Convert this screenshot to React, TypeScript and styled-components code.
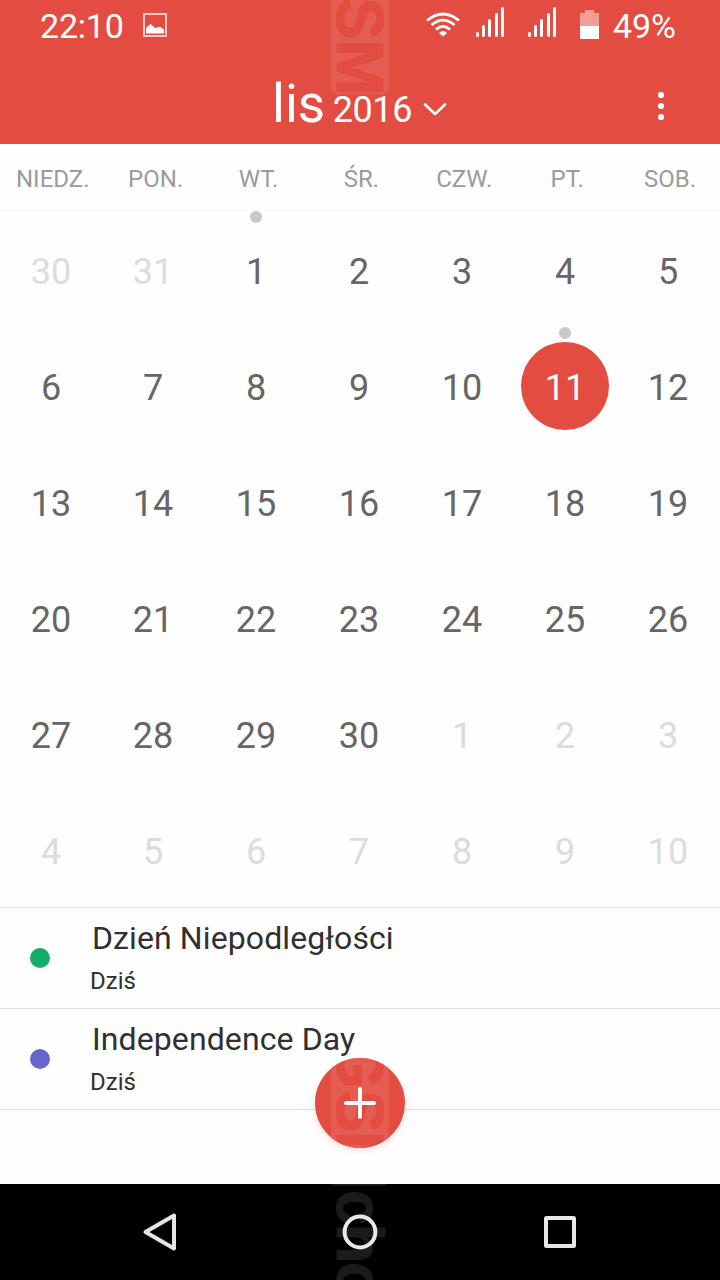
import React from 'react';
import styled, { createGlobalStyle } from 'styled-components';

const RED = '#e34c40';

const GlobalStyle = createGlobalStyle`
  * { box-sizing: border-box; }
  html, body { margin: 0; padding: 0; background: #fefefe; }
  body { font-family: Roboto, "Noto Sans", sans-serif; }
`;

const Screen = styled.div`
  width: 720px;
  height: 1280px;
  display: flex;
  flex-direction: column;
  overflow: hidden;
  background: #fefefe;
`;

const Header = styled.header`
  position: relative;
  height: 144px;
  flex: none;
  background: ${RED};
  color: #fff;
`;

const Stamp = styled.svg<{ $left: number }>`
  position: absolute;
  left: ${(p) => p.$left}px;
  top: 0;
  pointer-events: none;
`;

const StatusBar = styled.div`
  position: relative;
  height: 50px;
  padding: 0 44px 0 40px;
  display: flex;
  justify-content: space-between;
`;

const StatusGroup = styled.div`
  display: flex;
  align-items: flex-start;
`;

const StatusText = styled.span<{ $spacing?: number }>`
  font-size: 34px;
  line-height: 52px;
  letter-spacing: ${(p) => p.$spacing ?? 0}px;
`;

const Glyph = styled.svg`
  display: block;
  flex: none;
`;

const Spacer = styled.span<{ $w: number }>`
  width: ${(p) => p.$w}px;
  flex: none;
`;

const TitleBar = styled.div`
  position: relative;
  height: 94px;
  display: flex;
  justify-content: space-between;
  padding: 0 49px 0 272px;
`;

const MonthPicker = styled.div`
  display: flex;
  align-items: baseline;
  height: 94px;
  line-height: 108px;
`;

const MonthName = styled.span`
  font-size: 53px;
`;

const Year = styled.span`
  margin-left: 7.5px;
  font-size: 36px;
  letter-spacing: -0.4px;
`;

const Chevron = styled(Glyph)`
  margin-left: 11.5px;
  align-self: flex-start;
  margin-top: 50px;
`;

const MenuIcon = styled(Glyph)`
  margin-top: 40px;
`;

const Weekdays = styled.div`
  flex: none;
  height: 67px;
  width: 721px;
  margin-left: 1.3px;
  display: grid;
  grid-template-columns: repeat(7, 102.9px);
  color: #9b9b9b;
  font-size: 24px;
  line-height: 71px;
  text-align: center;
`;

const Divider = styled.div`
  flex: none;
  height: 1px;
  margin-top: -1px;
  background: #f8f8f8;
`;

const MonthGrid = styled.div`
  flex: none;
  display: grid;
  margin-left: 0.5px;
  grid-template-columns: 101px repeat(6, 103px);
  grid-auto-rows: 116px;
`;

const Cell = styled.div`
  display: flex;
  flex-direction: column;
  align-items: center;
`;

const Marker = styled.i<{ $on: boolean }>`
  width: 12px;
  height: 12px;
  flex: none;
  border-radius: 50%;
  margin-bottom: 3px;
  background: ${(p) => (p.$on ? '#c8c8c8' : 'transparent')};
`;

type DayKind = 'out' | 'in' | 'today';
const dayColor = { out: '#dcdcdc', in: '#666', today: '#fff' };

const Day = styled.div<{ $kind: DayKind }>`
  width: 88px;
  height: 88px;
  flex: none;
  border-radius: 50%;
  background: ${(p) => (p.$kind === 'today' ? RED : 'transparent')};
  color: ${(p) => dayColor[p.$kind]};
  font-size: 36px;
  line-height: 92px;
  text-align: center;
`;

const Events = styled.main`
  position: relative;
  flex: 1;
  border-top: 1px solid #e0e0e0;
`;

const EventRow = styled.div`
  height: 101px;
  border-bottom: 1px solid #e0e0e0;
  display: flex;
  align-items: center;
  padding-left: 30px;
`;

const EventDot = styled.i<{ $color: string }>`
  width: 20px;
  height: 20px;
  border-radius: 50%;
  background: ${(p) => p.$color};
`;

const EventText = styled.div`
  height: 100px;
  margin-left: 40px;
  padding-top: 9px;
  color: #303030;
`;

const EventTitle = styled.div`
  padding-left: 2px;
  font-size: 32px;
  line-height: 42px;
  letter-spacing: 0.1px;
`;

const EventWhen = styled.div`
  margin-top: 1px;
  font-size: 24px;
  line-height: 42px;
`;

const AddButton = styled.button`
  position: absolute;
  left: 315px;
  top: 150px;
  width: 90px;
  height: 90px;
  padding: 0;
  border: 0;
  border-radius: 50%;
  overflow: hidden;
  background: ${RED};
  box-shadow: 0 3px 6px rgba(227, 76, 64, 0.18);
`;

const NavBar = styled.nav`
  position: relative;
  flex: none;
  height: 96px;
  display: flex;
  align-items: center;
  justify-content: space-between;
  padding: 0 143px 0 142px;
  background: #000;
`;

const NavIcon = styled(Glyph)`
  position: relative;
`;

type LetterProps = { ch: string; x: number; y: number; length: number; color: string };

/* A bold letter turned a quarter clockwise, standing on the line at x. */
const Letter = ({ ch, x, y, length, color }: LetterProps) => (
  <text
    transform={`translate(${x} ${y}) rotate(90)`}
    fontFamily="Liberation Sans, sans-serif"
    fontWeight="bold"
    fontSize="67"
    textLength={length}
    lengthAdjust="spacingAndGlyphs"
    fill={color}
    stroke={color}
    strokeWidth="1"
    strokeLinejoin="round"
  >
    {ch}
  </text>
);

const Signal = () => (
  <Glyph width="29" height="50" viewBox="0 0 29 50">
    <path
      d="M1.500 33.500V35.500M7.500 26.500V35.500M13.500 20.500V35.500M20.500 14.500V35.500M26.500 8.500V35.500"
      stroke="#fff"
      strokeWidth="3"
      strokeLinecap="round"
    />
  </Glyph>
);

const weekdays = ['NIEDZ.', 'PON.', 'WT.', 'ŚR.', 'CZW.', 'PT.', 'SOB.'];

const days = Array.from({ length: 42 }, (_, i) => {
  const n = i - 1;
  const kind: DayKind = n < 1 || n > 30 ? 'out' : n === 11 ? 'today' : 'in';
  return { label: n < 1 ? n + 31 : n > 30 ? n - 30 : n, kind, marked: n === 1 || n === 11 };
});

const events = [
  { title: 'Dzień Niepodległości', when: 'Dziś', color: '#13ad67' },
  { title: 'Independence Day', when: 'Dziś', color: '#6466cc' },
];

export default function App() {
  return (
    <>
      <GlobalStyle />
      <Screen>
        <Header>
          <Stamp $left={331} width="58" height="94" viewBox="0 0 58 94">
            <rect y="-10" width="58" height="104" rx="5" fill="#e55d52" />
            <Letter ch="S" x={5.5} y={-2.5} length={42} color={RED} />
            <Letter ch="M" x={5.5} y={39} length={57} color={RED} />
          </Stamp>
          <StatusBar>
            <StatusGroup>
              <StatusText $spacing={-0.2}>22:10</StatusText>
              <Spacer $w={19} />
              <Glyph width="25" height="50" viewBox="0 0 25 50">
                <rect x="1" y="14" width="22" height="22" fill="none" stroke="#fad9d6" strokeWidth="1.8" />
                <path d="M3 33.500V28L7.500 24L12 28L17 26.800L21 29.500V33.500Z" fill="#fff" />
              </Glyph>
            </StatusGroup>
            <StatusGroup>
              <Glyph width="34" height="50" viewBox="0 0 34 50">
                <g fill="none" stroke="#fff" strokeWidth="2.7">
                  <path d="M1 20.500Q17 7.500 33 20.500" />
                  <path d="M5.500 25Q17 15.200 28.500 25" />
                  <path d="M10 29.500Q17 23.400 24 29.500" />
                </g>
                <path d="M13 33Q17 29 21 33L17 36.500Z" fill="#fff" />
              </Glyph>
              <Spacer $w={16} />
              <Signal />
              <Spacer $w={23} />
              <Signal />
              <Spacer $w={23} />
              <Glyph width="19" height="50" viewBox="0 0 19 50">
                <path d="M0 13H5V10H14V13H19V26H0Z" fill="#f19e98" />
                <path d="M0 26H19V39H0Z" fill="#fff" />
              </Glyph>
              <Spacer $w={14} />
              <StatusText>49%</StatusText>
            </StatusGroup>
          </StatusBar>
          <TitleBar>
            <MonthPicker>
              <MonthName>lis</MonthName>
              <Year>2016</Year>
              <Chevron width="24" height="18" viewBox="0 0 24 18">
                <path
                  d="M2 4.500L12 14L22 4.500"
                  fill="none"
                  stroke="#fff"
                  strokeWidth="2.6"
                  strokeLinecap="round"
                  strokeLinejoin="round"
                />
              </Chevron>
            </MonthPicker>
            <MenuIcon width="20" height="32" viewBox="0 0 20 32">
              <g fill="#fff">
                <circle cx="10" cy="5" r="3.1" />
                <circle cx="10" cy="16" r="3.1" />
                <circle cx="10" cy="27" r="3.1" />
              </g>
            </MenuIcon>
          </TitleBar>
        </Header>

        <Weekdays>
          {weekdays.map((d) => (
            <span key={d}>{d}</span>
          ))}
        </Weekdays>
        <Divider />

        <MonthGrid>
          {days.map((d, i) => (
            <Cell key={i}>
              <Marker $on={d.marked} />
              <Day $kind={d.kind}>{d.label}</Day>
            </Cell>
          ))}
        </MonthGrid>

        <Events>
          {events.map((e) => (
            <EventRow key={e.title}>
              <EventDot $color={e.color} />
              <EventText>
                <EventTitle>{e.title}</EventTitle>
                <EventWhen>{e.when}</EventWhen>
              </EventText>
            </EventRow>
          ))}
          <AddButton>
            <Stamp $left={0} width="90" height="90" viewBox="0 0 90 90">
              <rect x="16" width="57.500" height="90" fill="#e55d52" />
              <Letter ch="G" x={21.5} y={-19} length={50} color={RED} />
              <Letter ch="S" x={21.5} y={32.5} length={42} color={RED} />
              <Letter ch="M" x={21.5} y={73} length={57} color={RED} />
              <path d="M45 31V59M31 45H59" stroke="#fff" strokeWidth="4" strokeLinecap="round" />
            </Stamp>
          </AddButton>
        </Events>

        <NavBar>
          <Stamp $left={331} width="58" height="96" viewBox="0 0 58 96">
            <path d="M0 0H56Q54 2 51 2H5Q2 2 0 0Z" fill="#1b1b1b" />
            <Letter ch="c" x={5.5} y={6} length={35} color="#1b1b1b" />
            <Letter ch="h" x={5.5} y={39.5} length={40} color="#1b1b1b" />
            <Letter ch="o" x={5.5} y={78} length={38} color="#1b1b1b" />
          </Stamp>
          <NavIcon width="35" height="42" viewBox="0 0 35 42">
            <path d="M3.500 21L32 4.500V37.500Z" fill="none" stroke="#e6e6e6" strokeWidth="4" strokeLinejoin="round" />
          </NavIcon>
          <NavIcon width="36" height="36" viewBox="0 0 36 36">
            <circle cx="18" cy="18" r="15.400" fill="none" stroke="#e8e8e8" strokeWidth="4" />
          </NavIcon>
          <NavIcon width="34" height="34" viewBox="0 0 34 34">
            <rect
              x="3"
              y="3"
              width="28"
              height="28"
              rx="0.500"
              fill="none"
              stroke="#e6e6e6"
              strokeWidth="4"
              strokeLinejoin="round"
            />
          </NavIcon>
        </NavBar>
      </Screen>
    </>
  );
}
